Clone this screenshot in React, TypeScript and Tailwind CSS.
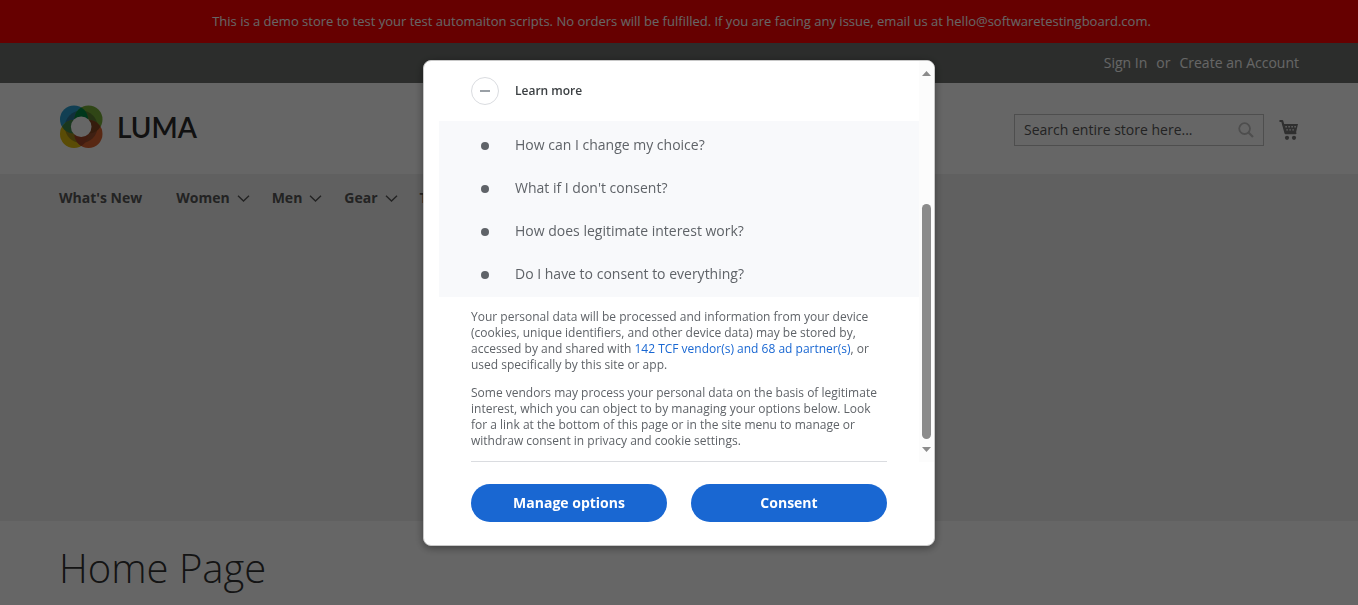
import React from "react";

const navItems = [
  { label: "What's New", menu: false },
  { label: "Women", menu: true },
  { label: "Men", menu: true },
  { label: "Gear", menu: true },
  { label: "Training", menu: true },
];

const questions = [
  "How can I change my choice?",
  "What if I don't consent?",
  "How does legitimate interest work?",
  "Do I have to consent to everything?",
];

function Chevron() {
  return (
    <svg width="13" height="8" viewBox="0 0 13 8" fill="none" stroke="#575757" strokeWidth="1.4" aria-hidden="true">
      <path d="M1 1.7 6.5 7 12 1.7" />
    </svg>
  );
}

function LogoMark() {
  return (
    <svg width="44" height="44" viewBox="0 0 44 44" aria-hidden="true">
      <defs>
        <clipPath id="clip-blue">
          <circle cx="15" cy="14.5" r="14" />
        </clipPath>
        <clipPath id="clip-orange">
          <circle cx="29.5" cy="29" r="14" />
        </clipPath>
      </defs>
      <circle cx="15" cy="14.5" r="14" fill="#2b9fd0" />
      <circle cx="29.5" cy="14.5" r="14" fill="#78ae38" />
      <circle cx="15" cy="29" r="14" fill="#e0bd10" />
      <circle cx="29.5" cy="29" r="14" fill="#dd6430" />
      <circle cx="22.2" cy="21.8" r="16.3" fill="#2a2a2a" fillOpacity="0.35" />
      <g clipPath="url(#clip-blue)">
        <circle cx="29.5" cy="14.5" r="14" fill="#008a45" />
        <circle cx="15" cy="29" r="14" fill="#3f8a4c" />
      </g>
      <g clipPath="url(#clip-orange)">
        <circle cx="29.5" cy="14.5" r="14" fill="#85481f" />
        <circle cx="15" cy="29" r="14" fill="#a5482a" />
      </g>
      <circle cx="22.2" cy="21.8" r="10.3" fill="#fff" />
    </svg>
  );
}

function CartIcon() {
  return (
    <svg width="20" height="22" viewBox="0 0 20 22" aria-hidden="true">
      <path d="M1.3 2H3.2L6.6 14.2H16.4" fill="none" stroke="#757575" strokeWidth="2.2" strokeLinecap="round" strokeLinejoin="round" />
      <path d="M3.4 5H19L17 13.4H6Z" fill="#757575" />
      <path
        fill="#fff"
        d="M6.4 7h1.4v1.4H6.4zM9.4 7h1.4v1.4H9.4zM12.4 7h1.4v1.4h-1.4zM15.4 7h1.4v1.4h-1.4zM7.4 10.2h1.4v1.4H7.4zM10.4 10.2h1.4v1.4h-1.4zM13.4 10.2h1.4v1.4h-1.4z"
      />
      <circle cx="8" cy="18.8" r="2.1" fill="#757575" />
      <circle cx="15" cy="18.8" r="2.1" fill="#757575" />
    </svg>
  );
}

function Store() {
  return (
    <div className="min-h-screen bg-white">
      <p className="bg-[#ff0000] py-3 pr-5 pl-[25px] text-center text-[13px] leading-[19px] text-white">
        This is a demo store to test your test automaiton scripts. No orders will be fulfilled. If you are facing any
        issue, email us at hello@softwaretestingboard.com.
      </p>
      <div className="bg-[#6e716e]">
        <div className="mx-auto flex h-10 max-w-[1280px] items-center justify-end gap-[9px] px-5 text-sm text-white">
          <a href="#signin">Sign In</a>
          <span>or</span>
          <a href="#create">Create an Account</a>
        </div>
      </div>
      <header className="mx-auto flex h-[91px] max-w-[1280px] items-center justify-between px-5">
        <a
          href="#home"
          className="flex items-center gap-[14px] pb-[3px] font-['Lato',sans-serif] text-[28px] font-semibold leading-8 text-[#2b2b2b]"
        >
          <LogoMark />
          LUMA
        </a>
        <div className="flex items-center gap-[15px] pt-[2px]">
          <form className="flex h-8 w-[250px] items-center border border-[#c2c2c2] pr-2 pl-[9px]" onSubmit={(e) => e.preventDefault()}>
            <input
              type="text"
              aria-label="Search"
              placeholder="Search entire store here..."
              className="min-w-0 flex-1 bg-transparent text-sm outline-none placeholder:text-[#575757] placeholder:opacity-100"
            />
            <button type="submit" aria-label="Search">
              <svg width="18" height="18" viewBox="0 0 18 18" fill="none" stroke="#c2c2c2" strokeWidth="1.8" aria-hidden="true">
                <circle cx="7.6" cy="7.6" r="5.4" />
                <path d="M11.5 11.5 16 16" strokeWidth="2.2" />
              </svg>
            </button>
          </form>
          <a href="#cart" aria-label="My Cart">
            <CartIcon />
          </a>
        </div>
      </header>
      <nav className="h-[347px] bg-[#f0f0f0]">
        <ul className="mx-auto flex max-w-[1280px] px-5">
          {navItems.map((item) => (
            <li key={item.label} className={item.menu ? "mr-[22px]" : "mr-[34px]"}>
              <a href="#category" className="flex h-12 items-center gap-[7px] text-sm font-bold text-[#575757]">
                {item.label}
                {item.menu && <Chevron />}
              </a>
            </li>
          ))}
        </ul>
      </nav>
      <main className="mx-auto max-w-[1280px] px-5 pt-5">
        <h1 className="text-[40px] font-light leading-[54px] text-[#333]">Home Page</h1>
      </main>
    </div>
  );
}

function ScrollTrack() {
  return (
    <div className="flex w-[15px] flex-col items-center bg-[#fcfcfc]" aria-hidden="true">
      <svg width="9" height="5" viewBox="0 0 9 5" className="mt-[10px]" fill="#8b8b8b">
        <path d="M0 5 4.5 0 9 5Z" />
      </svg>
      <div className="mt-32 w-[9px] flex-1 rounded-full bg-[#8b8b8b]" />
      <svg width="9" height="5" viewBox="0 0 9 5" className="mt-2 mb-[10px]" fill="#8b8b8b">
        <path d="M0 0 4.5 5 9 0Z" />
      </svg>
    </div>
  );
}

function ConsentDialog() {
  return (
    <section
      role="dialog"
      aria-modal="true"
      aria-label="Consent"
      className="w-full max-w-[512px] overflow-hidden rounded-lg border border-[#c8c8c8] bg-white text-[#5f6368] shadow-[0_2px_8px_rgba(0,0,0,0.4)]"
    >
      <div className="flex">
        <div className="min-w-0 flex-1 pl-[15px]">
          <button type="button" aria-expanded="true" className="flex h-[60px] w-full items-center gap-4 pl-8 text-xs font-semibold text-[#3c4043]">
            <span className="flex size-7 items-center justify-center rounded-full border border-[#dadce0]">
              <span className="h-[2px] w-[10px] bg-[#9aa0a6]" />
            </span>
            Learn more
          </button>
          <ul className="bg-[#f8f9fb] py-[2px]">
            {questions.map((q) => (
              <li key={q} className="flex h-[43px] items-center pl-[42px] text-sm">
                <span className="mt-[2px] mr-[26px] size-2 rounded-full bg-[#5f6368]" />
                <a href="#faq">{q}</a>
              </li>
            ))}
          </ul>
          <div className="mx-8 border-b border-[#dadce0] py-3 text-xs leading-4">
            <p className="mb-3">
              Your personal data will be processed and information from your device (cookies, unique identifiers, and
              other device data) may be stored by, accessed by and shared with{" "}
              <a href="#vendors" className="text-[#1967d2]">
                142 TCF vendor(s) and 68 ad partner(s)
              </a>
              , or used specifically by this site or app.
            </p>
            <p>
              Some vendors may process your personal data on the basis of legitimate interest, which you can object to
              by managing your options below. Look for a link at the bottom of this page or in the site menu to manage
              or withdraw consent in privacy and cookie settings.
            </p>
          </div>
        </div>
        <ScrollTrack />
      </div>
      <div className="flex gap-6 px-[47px] pt-[22px] pb-[23px] text-sm font-bold text-white">
        <button type="button" className="h-[38px] flex-1 rounded-full bg-[#1967d2]">
          Manage options
        </button>
        <button type="button" className="h-[38px] flex-1 rounded-full bg-[#1967d2]">
          Consent
        </button>
      </div>
    </section>
  );
}

export default function App() {
  return (
    <div className="h-screen overflow-hidden font-['Open_Sans','Noto_Sans',sans-serif]">
      <Store />
      <div className="fixed inset-0 flex items-center justify-center bg-black/60 pt-px">
        <ConsentDialog />
      </div>
    </div>
  );
}
